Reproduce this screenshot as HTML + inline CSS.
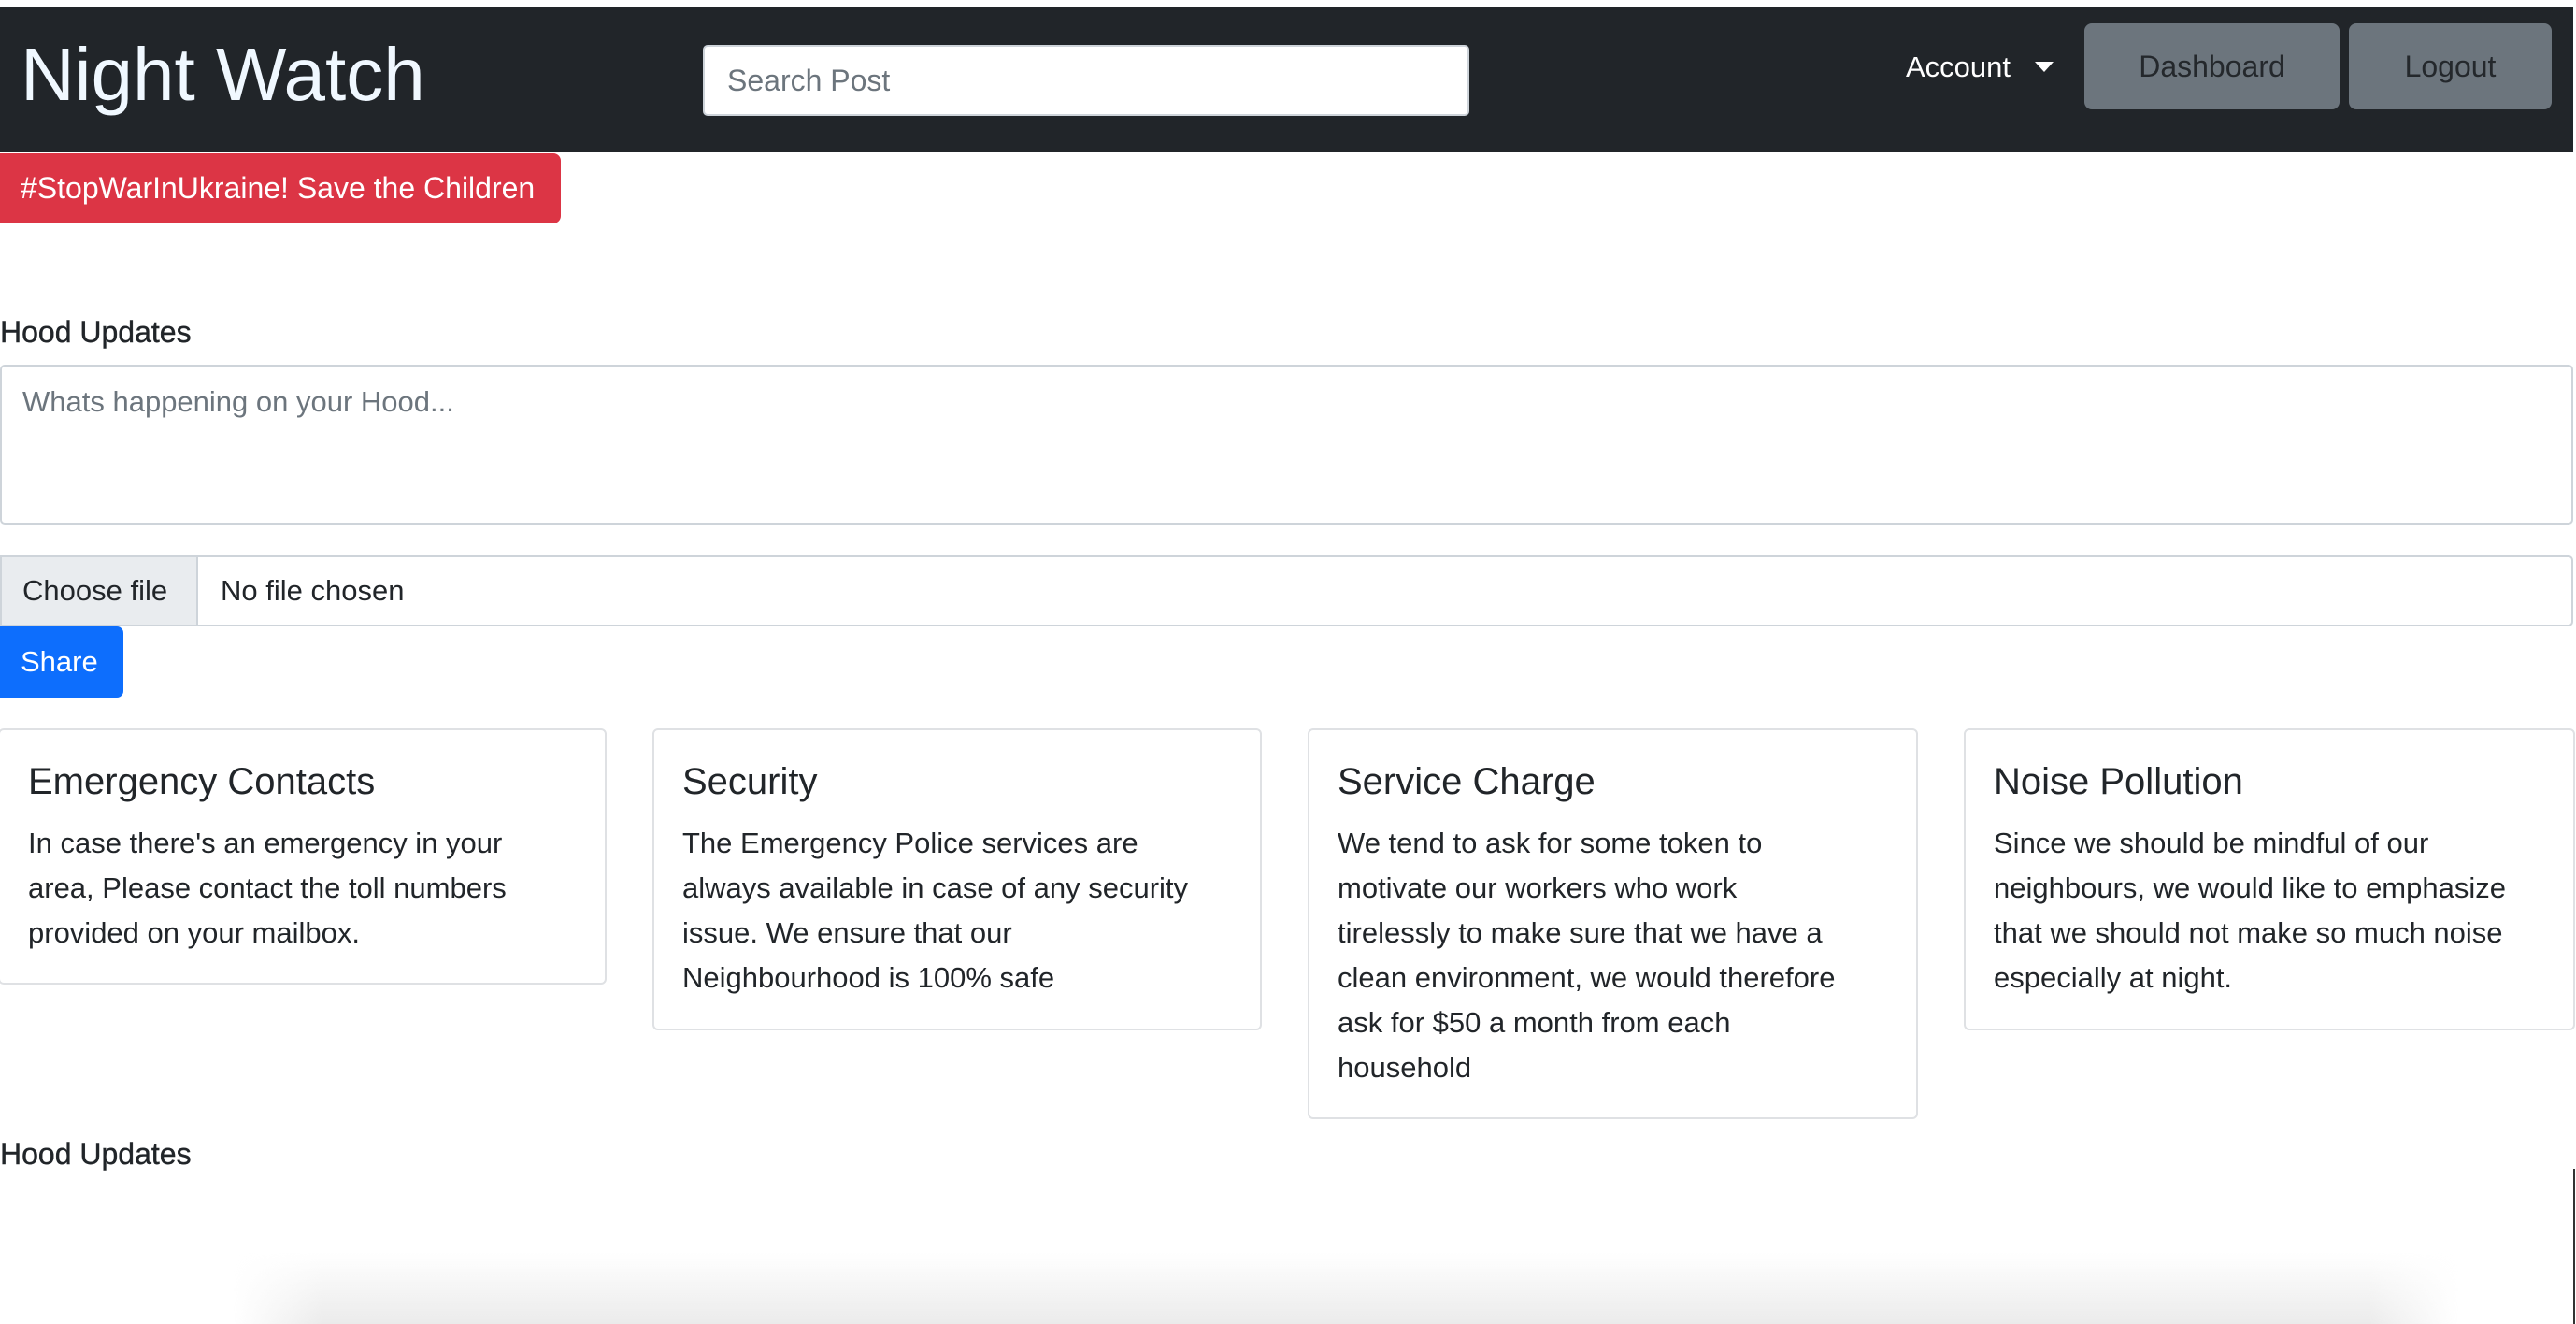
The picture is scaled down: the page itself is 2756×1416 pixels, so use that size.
<!DOCTYPE html>
<html><head><meta charset="utf-8"><style>
*{box-sizing:border-box;margin:0;padding:0}
html,body{width:2756px;height:1416px;overflow:hidden;background:#fff;font-family:"Liberation Sans",Helvetica,Arial,sans-serif;color:#212529;position:relative}
.a{position:absolute}
#nav{left:0;top:7px;width:2753px;height:156px;background:#212529;border-top:1px solid #cfd2d6}
.brand{left:22px;top:22px;font-size:80px;color:#f0f8ff;line-height:100px;white-space:nowrap}
.search{left:752px;top:40px;width:820px;height:76px;background:#fff;border:2px solid #ced4da;border-radius:5px;font-size:32px;color:#6c757d;padding-left:24px;line-height:72px}
.acct{left:2039px;top:43px;font-size:31px;color:#fff;line-height:42px}
.caret{left:2177px;top:58px;width:0;height:0;border-left:10px solid transparent;border-right:10px solid transparent;border-top:11px solid #fff}
.btn{background:#6c757d;border-radius:8px;color:#24282c;font-size:32px;text-align:center;line-height:92px;top:17px;height:92px}
.red{left:0;top:164px;width:600px;height:75px;background:#dc3545;border-radius:0 8px 8px 0;color:#fff;font-size:32px;line-height:75px;padding-left:22px;white-space:nowrap}
.lbl{left:0;font-size:32px;line-height:40px;color:#212529;-webkit-text-stroke:0.4px #212529}
.ta{left:0;top:390px;width:2753px;height:171px;border:2px solid #ced4da;border-radius:5px;font-size:31px;color:#6c757d;padding:20px 22px}
.file{left:0;top:594px;width:2753px;height:76px;border:2px solid #ced4da;border-radius:0 5px 5px 0;font-size:31px;line-height:72px}
.cf{left:0;top:0;width:210px;height:72px;background:#e9ecef;border-right:2px solid #ced4da;padding-left:22px}
.nf{left:234px;top:0}
.share{left:0;top:670px;width:132px;height:76px;background:#0d6efd;color:#fff;border-radius:0 7px 7px 0;font-size:31px;line-height:76px;padding-left:22px}
.card{top:779px;border:2px solid #dfe1e4;border-radius:6px;background:#fff}
.card h5{position:absolute;left:30px;top:32px;font-size:40px;font-weight:normal;line-height:46px;white-space:nowrap;color:#212529}
.card p{position:absolute;left:30px;top:97px;font-size:31px;line-height:48px;white-space:nowrap;color:#212529}
.shadow{left:250px;top:1340px;width:2380px;height:76px;background:linear-gradient(to bottom,rgba(235,235,235,0),#ebebeb);-webkit-mask-image:linear-gradient(to right,transparent,#000 4%,#000 96%,transparent);mask-image:linear-gradient(to right,transparent,#000 4%,#000 96%,transparent)}
</style></head><body>
<div class="a" id="nav">
  <div class="a brand">Night Watch</div>
  <div class="a search">Search Post</div>
  <div class="a acct">Account</div>
  <div class="a caret"></div>
  <div class="a btn" style="left:2230px;width:273px">Dashboard</div>
  <div class="a btn" style="left:2513px;width:217px">Logout</div>
</div>
<div class="a red">#StopWarInUkraine! Save the Children</div>
<div class="a lbl" style="top:335px">Hood Updates</div>
<div class="a ta">Whats happening on your Hood...</div>
<div class="a file"><div class="a cf">Choose file</div><div class="a nf">No file chosen</div></div>
<div class="a share">Share</div>

<div class="a card" style="left:-2px;width:651px;height:274px"><h5>Emergency Contacts</h5><p>In case there's an emergency in your<br>area, Please contact the toll numbers<br>provided on your mailbox.</p></div>
<div class="a card" style="left:698px;width:652px;height:323px"><h5>Security</h5><p>The Emergency Police services are<br>always available in case of any security<br>issue. We ensure that our<br>Neighbourhood is 100% safe</p></div>
<div class="a card" style="left:1399px;width:653px;height:418px"><h5>Service Charge</h5><p>We tend to ask for some token to<br>motivate our workers who work<br>tirelessly to make sure that we have a<br>clean environment, we would therefore<br>ask for $50 a month from each<br>household</p></div>
<div class="a card" style="left:2101px;width:654px;height:323px"><h5>Noise Pollution</h5><p>Since we should be mindful of our<br>neighbours, we would like to emphasize<br>that we should not make so much noise<br>especially at night.</p></div>

<div class="a lbl" style="top:1214px">Hood Updates</div>
<div class="a shadow"></div>
<div class="a" style="left:2753px;top:1250px;width:2px;height:166px;background:#333"></div>
</body></html>
